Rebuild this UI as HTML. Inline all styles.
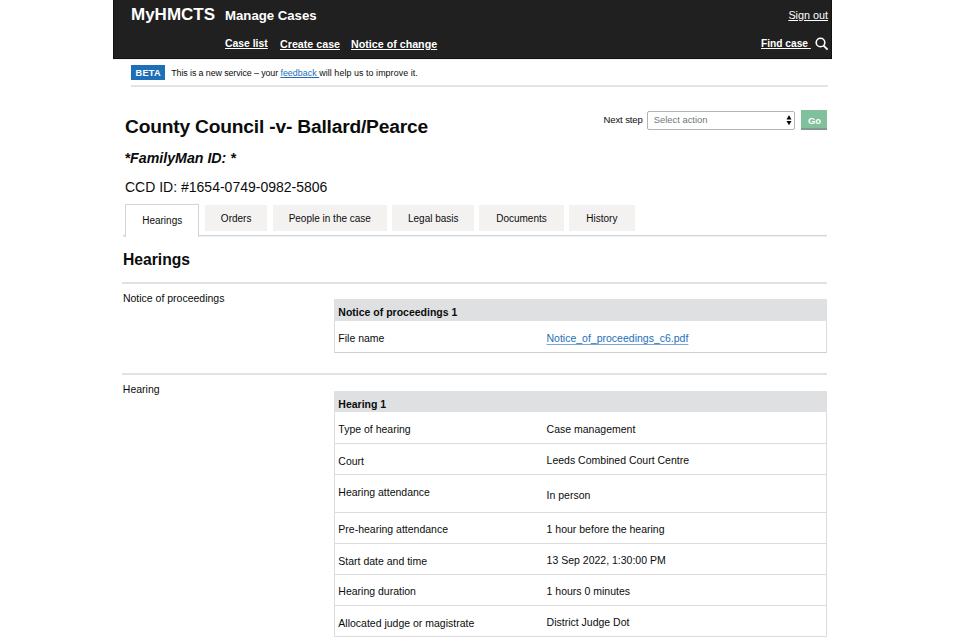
<!DOCTYPE html>
<html><head><meta charset="utf-8"><style>
html,body{margin:0;padding:0;background:#fff;width:960px;height:640px;overflow:hidden;position:relative;font-family:"Liberation Sans",sans-serif;}
.t{position:absolute;white-space:nowrap;}
.r{position:absolute;}
</style></head><body>
<div class="r" style="left:113px;top:0px;width:719.00px;height:59.00px;background:#202020;border:1px solid #111;border-top:none;box-sizing:border-box;"></div>
<div class="r" style="left:113px;top:59px;width:719.00px;height:1.00px;background:#f2f2f2;"></div>
<div class="t" style="top:6.01px;font-size:17px;line-height:17px;left:131.00px;font-weight:bold;color:#fff;">MyHMCTS</div>
<div class="t" style="top:8.63px;font-size:13.2px;line-height:13.2px;left:225.00px;font-weight:bold;color:#fff;">Manage Cases</div>
<div class="t" style="top:9.86px;font-size:10.8px;line-height:10.8px;right:132.00px;color:#fff;text-decoration:underline;">Sign out</div>
<div class="t" style="top:39.20px;font-size:10.4px;line-height:10.4px;left:225.00px;font-weight:bold;color:#fff;text-decoration:underline;">Case list</div>
<div class="t" style="top:38.94px;font-size:10.7px;line-height:10.7px;left:280.00px;font-weight:bold;color:#fff;text-decoration:underline;">Create case</div>
<div class="t" style="top:38.94px;font-size:10.7px;line-height:10.7px;left:351.00px;font-weight:bold;color:#fff;text-decoration:underline;">Notice of change</div>
<div class="t" style="top:38.77px;font-size:10.2px;line-height:10.2px;left:761.00px;font-weight:bold;color:#fff;text-decoration:underline;">Find case&nbsp;</div>
<svg class="r" style="left:814px;top:36px" width="16" height="16" viewBox="0 0 16 16"><circle cx="6.5" cy="6.5" r="4.3" fill="none" stroke="#fff" stroke-width="1.6"/><line x1="9.6" y1="9.6" x2="13.6" y2="13.6" stroke="#fff" stroke-width="1.8"/></svg>
<div class="r" style="left:131px;top:65px;width:34.00px;height:14.50px;background:#1d70b8;"></div>
<div class="t" style="top:68.51px;font-size:9.2px;line-height:9.2px;left:135.50px;font-weight:bold;color:#fff;letter-spacing:0.25px;">BETA</div>
<div class="t" style="top:69.07px;font-size:8.9px;line-height:8.9px;left:171.30px;color:#0b0c0c;"><span style="letter-spacing:-0.1px">This is a new service – your </span><span style="color:#1d70b8;text-decoration:underline;letter-spacing:0.04px">feedback </span><span style="letter-spacing:0.07px">will help us to improve it.</span></div>
<div class="r" style="left:131px;top:85px;width:697.00px;height:2.00px;background:#e3e4e5;"></div>
<div class="t" style="top:116.55px;font-size:19.2px;line-height:19.2px;left:125.00px;font-weight:bold;color:#0b0c0c;letter-spacing:-0.19px;">County Council -v- Ballard/Pearce</div>
<div class="t" style="top:115.16px;font-size:9.5px;line-height:9.5px;left:603.50px;color:#0b0c0c;letter-spacing:-0.1px;">Next step</div>
<div class="r" style="left:647px;top:111px;width:148.00px;height:19.00px;background:#fff;border:1px solid #b1b4b6;border-radius:2px;box-sizing:border-box;"></div>
<div class="t" style="top:115.44px;font-size:9.4px;line-height:9.4px;left:653.80px;color:#6f777b;">Select action</div>
<svg class="r" style="left:786px;top:115px" width="6" height="11" viewBox="0 0 6 11"><path d="M3 0.3L5.5 4.6H0.5Z M3 10.3L5.5 5.9H0.5Z" fill="#000"/></svg>
<div class="r" style="left:801px;top:110px;width:26.00px;height:18.00px;background:#80c09d;box-shadow:0 2px 0 #7f9a8b;"></div>
<div class="t" style="top:115.84px;font-size:9.4px;line-height:9.4px;left:807.90px;font-weight:bold;color:#fff;">Go</div>
<div class="t" style="top:150.78px;font-size:14.2px;line-height:14.2px;left:124.60px;font-weight:bold;font-style:italic;color:#0b0c0c;">*FamilyMan ID: *</div>
<div class="t" style="top:180.15px;font-size:14px;line-height:14px;left:125.00px;color:#0b0c0c;">CCD ID: #1654-0749-0982-5806</div>
<div class="r" style="left:123px;top:235px;width:704.00px;height:1.00px;background:#d3d5d7;"></div>
<div class="r" style="left:123px;top:236px;width:704.00px;height:1.00px;background:#eeeff0;"></div>
<div class="r" style="left:125px;top:204px;width:74.00px;height:33.00px;background:#fff;border:1px solid #d3d5d7;border-bottom:none;box-sizing:border-box;"></div>
<div class="t" style="top:216.44px;font-size:10px;line-height:10px;left:142.20px;color:#0b0c0c;">Hearings</div>
<div class="r" style="left:205px;top:205px;width:62.00px;height:26.00px;background:#f3f2f1;"></div>
<div class="t" style="left:205px;width:62.30px;text-align:center;top:213.84px;font-size:10px;line-height:10px;color:#0b0c0c">Orders</div>
<div class="r" style="left:273px;top:205px;width:114.00px;height:26.00px;background:#f3f2f1;"></div>
<div class="t" style="left:272.9px;width:113.80px;text-align:center;top:213.84px;font-size:10px;line-height:10px;color:#0b0c0c">People in the case</div>
<div class="r" style="left:392px;top:205px;width:82.00px;height:26.00px;background:#f3f2f1;"></div>
<div class="t" style="left:392.5px;width:81.50px;text-align:center;top:213.84px;font-size:10px;line-height:10px;color:#0b0c0c">Legal basis</div>
<div class="r" style="left:479px;top:205px;width:85.00px;height:26.00px;background:#f3f2f1;"></div>
<div class="t" style="left:479.2px;width:84.55px;text-align:center;top:213.84px;font-size:10px;line-height:10px;color:#0b0c0c">Documents</div>
<div class="r" style="left:569px;top:205px;width:66.00px;height:26.00px;background:#f3f2f1;"></div>
<div class="t" style="left:569.2px;width:65.40px;text-align:center;top:213.84px;font-size:10px;line-height:10px;color:#0b0c0c">History</div>
<div class="t" style="top:251.71px;font-size:15.7px;line-height:15.7px;left:122.90px;font-weight:bold;color:#0b0c0c;">Hearings</div>
<div class="r" style="left:122px;top:282px;width:705.00px;height:2.00px;background:#e1e2e3;"></div>
<div class="t" style="top:292.71px;font-size:10.5px;line-height:10.5px;left:122.90px;color:#0b0c0c;">Notice of proceedings</div>
<div class="r" style="left:334px;top:299px;width:493.00px;height:22.00px;background:#dee0e2;"></div>
<div class="r" style="left:334px;top:321px;width:493.00px;height:32.00px;background:#fff;border:1px solid #dcdcdc;border-top:none;border-bottom-color:#cfcfcf;box-sizing:border-box;"></div>
<div class="t" style="top:307.36px;font-size:10.5px;line-height:10.5px;left:338.30px;font-weight:bold;color:#0b0c0c;">Notice of proceedings 1</div>
<div class="t" style="top:333.41px;font-size:10.5px;line-height:10.5px;left:338.30px;color:#0b0c0c;">File name</div>
<div class="t" style="top:332.81px;font-size:10.5px;line-height:10.5px;left:546.50px;color:#1d70b8;text-decoration:underline;text-decoration-color:#7aa6d6;text-underline-offset:1.5px;">Notice_of_proceedings_c6.pdf</div>
<div class="r" style="left:122px;top:373px;width:705.00px;height:2.00px;background:#e1e2e3;"></div>
<div class="t" style="top:384.21px;font-size:10.5px;line-height:10.5px;left:122.80px;color:#0b0c0c;">Hearing</div>
<div class="r" style="left:334px;top:391px;width:493.00px;height:21.00px;background:#dee0e2;"></div>
<div class="r" style="left:334px;top:412px;width:493.00px;height:225.00px;background:#fff;border-left:1px solid #dcdcdc;border-right:1px solid #dcdcdc;box-sizing:border-box;"></div>
<div class="t" style="top:398.91px;font-size:10.5px;line-height:10.5px;left:338.30px;font-weight:bold;color:#0b0c0c;">Hearing 1</div>
<div class="r" style="left:334px;top:443px;width:493.00px;height:1.00px;background:#dcdcdc;"></div>
<div class="r" style="left:334px;top:474px;width:493.00px;height:1.00px;background:#dcdcdc;"></div>
<div class="r" style="left:334px;top:512px;width:493.00px;height:1.00px;background:#dcdcdc;"></div>
<div class="r" style="left:334px;top:543px;width:493.00px;height:1.00px;background:#dcdcdc;"></div>
<div class="r" style="left:334px;top:574px;width:493.00px;height:1.00px;background:#dcdcdc;"></div>
<div class="r" style="left:334px;top:605px;width:493.00px;height:1.00px;background:#dcdcdc;"></div>
<div class="r" style="left:334px;top:636px;width:493.00px;height:1.00px;background:#dcdcdc;"></div>
<div class="t" style="top:424.21px;font-size:10.5px;line-height:10.5px;left:338.30px;color:#0b0c0c;">Type of hearing</div>
<div class="t" style="top:424.21px;font-size:10.5px;line-height:10.5px;left:546.60px;color:#0b0c0c;">Case management</div>
<div class="t" style="top:455.51px;font-size:10.5px;line-height:10.5px;left:338.30px;color:#0b0c0c;">Court</div>
<div class="t" style="top:455.01px;font-size:10.5px;line-height:10.5px;left:546.60px;color:#0b0c0c;">Leeds Combined Court Centre</div>
<div class="t" style="top:486.81px;font-size:10.5px;line-height:10.5px;left:338.30px;color:#0b0c0c;">Hearing attendance</div>
<div class="t" style="top:490.11px;font-size:10.5px;line-height:10.5px;left:546.60px;color:#0b0c0c;">In person</div>
<div class="t" style="top:524.31px;font-size:10.5px;line-height:10.5px;left:338.30px;color:#0b0c0c;">Pre-hearing attendance</div>
<div class="t" style="top:523.61px;font-size:10.5px;line-height:10.5px;left:546.60px;color:#0b0c0c;">1 hour before the hearing</div>
<div class="t" style="top:555.91px;font-size:10.5px;line-height:10.5px;left:338.30px;color:#0b0c0c;">Start date and time</div>
<div class="t" style="top:555.11px;font-size:10.5px;line-height:10.5px;left:546.60px;color:#0b0c0c;">13 Sep 2022, 1:30:00 PM</div>
<div class="t" style="top:586.41px;font-size:10.5px;line-height:10.5px;left:338.30px;color:#0b0c0c;">Hearing duration</div>
<div class="t" style="top:585.61px;font-size:10.5px;line-height:10.5px;left:546.60px;color:#0b0c0c;">1 hours 0 minutes</div>
<div class="t" style="top:617.71px;font-size:10.5px;line-height:10.5px;left:338.30px;color:#0b0c0c;">Allocated judge or magistrate</div>
<div class="t" style="top:616.61px;font-size:10.5px;line-height:10.5px;left:546.60px;color:#0b0c0c;">District Judge Dot</div>
</body></html>
